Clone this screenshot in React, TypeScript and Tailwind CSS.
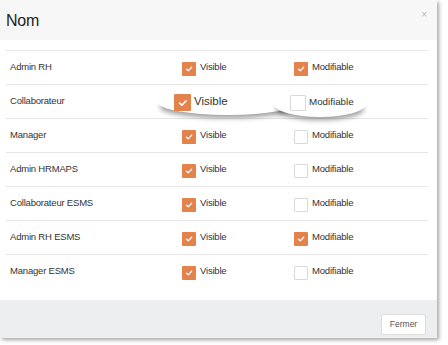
import * as React from "react";

type Row = { name: string; visible: boolean; edit: boolean; focus?: boolean };

const rows: Row[] = [
  { name: "Admin RH", visible: true, edit: true },
  { name: "Collaborateur", visible: true, edit: false, focus: true },
  { name: "Manager", visible: true, edit: false },
  { name: "Admin HRMAPS", visible: true, edit: false },
  { name: "Collaborateur ESMS", visible: true, edit: false },
  { name: "Admin RH ESMS", visible: true, edit: true },
  { name: "Manager ESMS", visible: true, edit: false },
];

function Box({ checked, size }: { checked: boolean; size: string }) {
  if (!checked) {
    return <span className={`${size} shrink-0 border border-[#d9d9d9] bg-white rounded-[1px]`} />;
  }
  return (
    <span className={`${size} shrink-0 bg-[#e4824b] rounded-[1px] flex items-center justify-center`}>
      <svg viewBox="0 0 10 10" className="w-[58%] h-[58%]">
        <path d="M1.8 5.2 L4 7.2 L8.2 2.8" fill="none" stroke="white" strokeWidth="1.6" strokeLinecap="round" strokeLinejoin="round" />
      </svg>
    </span>
  );
}

function Check({ checked, label }: { checked: boolean; label: string }) {
  return (
    <div className="flex items-center gap-[4px] mt-[3px]">
      <Box checked={checked} size="w-[14px] h-[14px]" />
      <span className="text-[9.5px] tracking-[-0.2px] text-[#333] mb-[3px]">{label}</span>
    </div>
  );
}

function BigCheck({ checked, label, box, text }: { checked: boolean; label: string; box: string; text: string }) {
  return (
    <div className="relative flex items-center">
      <span className="absolute left-[-16px] right-[-12px] top-[-4px] h-[26px] rounded-[50%] bg-white shadow-[0_5px_5px_-2px_rgba(0,0,0,0.38)]" />
      <div className="relative flex items-center gap-[3px]">
        <Box checked={checked} size={box} />
        <span className={`${text} text-[#333] mb-[1px]`}>{label}</span>
      </div>
    </div>
  );
}

export default function App() {
  return (
    <div className="w-[448px] h-[345px] bg-white" style={{ fontFamily: '"Liberation Sans", Arial, sans-serif' }}>
      <div className="w-[437px] h-[338px] bg-white shadow-[2px_2px_4px_rgba(0,0,0,0.35)] flex flex-col">
        <div className="h-[40px] bg-[#f7f7f7] flex items-center justify-between pl-[6px] pr-[10px]">
          <span className="text-[16px] tracking-[-0.2px] text-[#222] mt-[2px]">Nom</span>
          <span className="text-[10px] text-[#bbb] -mt-[12px]">×</span>
        </div>
        <div className="flex-1 pt-[10px] px-[6px] pr-[9px]">
          {rows.map((r) => (
            <div key={r.name} className="h-[34px] border-t border-[#e6e6e6] flex items-center">
              <span className="w-[176px] pl-[4px] text-[9.5px] tracking-[-0.2px] text-[#333]">{r.name}</span>
              {r.focus ? (
                <>
                  <div className="w-[112px] -ml-[8px] mr-[8px] mt-[2px]">
                    <BigCheck checked={r.visible} label="Visible" box="w-[17px] h-[17px]" text="text-[11.5px]" />
                  </div>
                  <div className="-ml-[4px] mt-[2px]">
                    <BigCheck checked={r.edit} label="Modifiable" box="w-[16px] h-[16px]" text="text-[9.8px]" />
                  </div>
                </>
              ) : (
                <>
                  <div className="w-[112px]">
                    <Check checked={r.visible} label="Visible" />
                  </div>
                  <Check checked={r.edit} label="Modifiable" />
                </>
              )}
            </div>
          ))}
        </div>
        <div className="h-[38px] bg-[#eceeef] flex items-center justify-end pr-[11px]">
          <button className="h-[21px] w-[45px] bg-white border border-[#dcdcdc] rounded-[2px] text-[8.5px] text-[#555] mt-[10px]">
            Fermer
          </button>
        </div>
      </div>
    </div>
  );
}
